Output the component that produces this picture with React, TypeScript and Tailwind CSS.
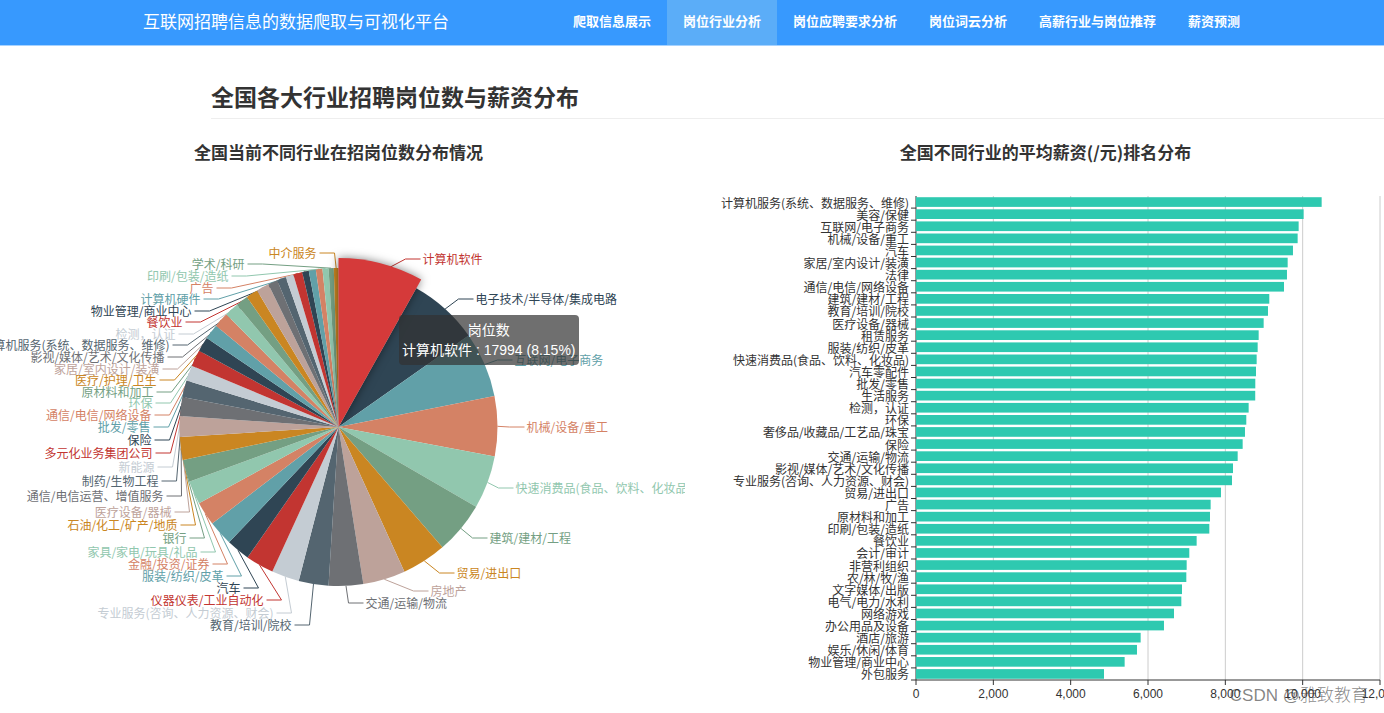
/**
 * Industry analysis page: share of open positions per industry (pie) next to
 * the average salary ranking (horizontal bars).
 */

const NAV_ITEMS = [
  { label: "爬取信息展示", href: "#crawl" },
  { label: "岗位行业分析", href: "#industry", active: true },
  { label: "岗位应聘要求分析", href: "#requirements" },
  { label: "岗位词云分析", href: "#wordcloud" },
  { label: "高薪行业与岗位推荐", href: "#recommend" },
  { label: "薪资预测", href: "#predict" },
];

const PALETTE = [
  "#c23531", "#2f4554", "#61a0a8", "#d48265", "#91c7ae", "#749f83",
  "#ca8622", "#bda29a", "#6e7074", "#546570", "#c4ccd3",
];

// end = closing angle in degrees, clockwise from the top.
// x / y = elbow of the label line, relative to the pie centre.
type Slice = { name: string; end: number; x: number; y: number };

const SLICES: Slice[] = [
  { name: "计算机软件", end: 29.3, x: 67, y: -168 },
  { name: "电子技术/半导体/集成电路", end: 54.9, x: 120, y: -128 },
  { name: "互联网/电子商务", end: 78.8, x: 159, y: -67 },
  { name: "机械/设备/重工", end: 100.7, x: 171, y: 0 },
  { name: "快速消费品(食品、饮料、化妆品)", end: 120.1, x: 160, y: 61 },
  { name: "建筑/建材/工程", end: 139.2, x: 134, y: 111 },
  { name: "贸易/进出口", end: 155.5, x: 101, y: 146 },
  { name: "房地产", end: 171, x: 75, y: 164 },
  { name: "交通/运输/物流", end: 183.6, x: 10, y: 176 },
  { name: "教育/培训/院校", end: 194.5, x: -29, y: 198 },
  { name: "专业服务(咨询、人力资源、财会)", end: 204.6, x: -47, y: 186 },
  { name: "仪器仪表/工业自动化", end: 214.9, x: -57, y: 173 },
  { name: "汽车", end: 223.5, x: -80, y: 161 },
  { name: "服装/纺织/皮革", end: 232.6, x: -97, y: 149 },
  { name: "金融/投资/证券", end: 241.3, x: -111, y: 137 },
  { name: "家具/家电/玩具/礼品", end: 249.9, x: -123, y: 125 },
  { name: "银行", end: 258, x: -134, y: 111 },
  { name: "石油/化工/矿产/地质", end: 266.4, x: -143, y: 98 },
  { name: "医疗设备/器械", end: 274, x: -149, y: 85 },
  { name: "通信/电信运营、增值服务", end: 280.9, x: -157, y: 69 },
  { name: "制药/生物工程", end: 287, x: -162, y: 54 },
  { name: "新能源", end: 292.7, x: -166, y: 40 },
  { name: "多元化业务集团公司", end: 298.7, x: -168, y: 26 },
  { name: "保险", end: 304, x: -169, y: 13 },
  { name: "批发/零售", end: 309.6, x: -170, y: 0 },
  { name: "通信/电信/网络设备", end: 315.1, x: -169, y: -12 },
  { name: "环保", end: 320.3, x: -168, y: -24 },
  { name: "原材料和加工", end: 324.8, x: -167, y: -35 },
  { name: "医疗/护理/卫生", end: 329.2, x: -164, y: -47 },
  { name: "家居/室内设计/装潢", end: 333.8, x: -161, y: -58 },
  { name: "影视/媒体/艺术/文化传播", end: 337.3, x: -156, y: -70 },
  { name: "计算机服务(系统、数据服务、维修)", end: 340.6, x: -151, y: -82 },
  { name: "检测，认证", end: 343.5, x: -145, y: -93 },
  { name: "餐饮业", end: 346.8, x: -138, y: -105 },
  { name: "物业管理/商业中心", end: 349.2, x: -129, y: -116 },
  { name: "计算机硬件", end: 351.8, x: -120, y: -128 },
  { name: "广告", end: 354.2, x: -107, y: -139 },
  { name: "印刷/包装/造纸", end: 356.4, x: -92, y: -151 },
  { name: "学术/科研", end: 358.3, x: -76, y: -163 },
  { name: "中介服务", end: 360, x: -4, y: -174 },
];

const SALARIES: [string, number][] = [
  ["计算机服务(系统、数据服务、维修)", 10491],
  ["美容/保健", 10025],
  ["互联网/电子商务", 9896],
  ["机械/设备/重工", 9870],
  ["汽车", 9749],
  ["家居/室内设计/装潢", 9612],
  ["法律", 9594],
  ["通信/电信/网络设备", 9517],
  ["建筑/建材/工程", 9137],
  ["教育/培训/院校", 9103],
  ["医疗设备/器械", 8991],
  ["租赁服务", 8862],
  ["服装/纺织/皮革", 8836],
  ["快速消费品(食品、饮料、化妆品)", 8810],
  ["汽车零配件", 8793],
  ["批发/零售", 8775],
  ["生活服务", 8773],
  ["检测，认证", 8603],
  ["环保", 8542],
  ["奢侈品/收藏品/工艺品/珠宝", 8508],
  ["保险", 8448],
  ["交通/运输/物流", 8319],
  ["影视/媒体/艺术/文化传播", 8198],
  ["专业服务(咨询、人力资源、财会)", 8172],
  ["贸易/进出口", 7887],
  ["广告", 7620],
  ["原材料和加工", 7603],
  ["印刷/包装/造纸", 7586],
  ["餐饮业", 7258],
  ["会计/审计", 7068],
  ["非营利组织", 7000],
  ["农/林/牧/渔", 6991],
  ["文字媒体/出版", 6879],
  ["电气/电力/水利", 6862],
  ["网络游戏", 6672],
  ["办公用品及设备", 6413],
  ["酒店/旅游", 5810],
  ["娱乐/休闲/体育", 5715],
  ["物业管理/商业中心", 5396],
  ["外包服务", 4862],
];

const RADIUS = 159;
const HOVER_RADIUS = 169;

function polar(deg: number, r: number): [number, number] {
  const a = (deg * Math.PI) / 180;
  return [r * Math.sin(a), -r * Math.cos(a)];
}

function wedge(start: number, end: number, r: number): string {
  const [x1, y1] = polar(start, r);
  const [x2, y2] = polar(end, r);
  return `M0 0 L${x1} ${y1} A${r} ${r} 0 0 1 ${x2} ${y2} Z`;
}

const ARCS = SLICES.map((s, i) => ({
  ...s,
  start: i ? SLICES[i - 1].end : 0,
  color: PALETTE[i % PALETTE.length],
  dir: i < 9 ? 1 : -1,
}));

function PieChart() {
  return (
    <svg
      className="block h-[540px] w-full overflow-visible"
      role="img"
      aria-label="全国当前不同行业在招岗位数分布情况"
    >
      <svg x="50%" y={257} className="overflow-visible">
        {/* label lines run underneath the slices */}
        {ARCS.map((s) => {
          const [px, py] = polar((s.start + s.end) / 2, RADIUS);
          return (
            <polyline
              key={s.name}
              points={`${px},${py} ${s.x},${s.y} ${s.x + s.dir * 15},${s.y}`}
              fill="none"
              stroke={s.color}
            />
          );
        })}
        {ARCS.slice(1).map((s) => (
          <path key={s.name} d={wedge(s.start, s.end, RADIUS)} fill={s.color} />
        ))}
        {ARCS.map((s) => (
          <text
            key={s.name}
            x={s.dir > 0 ? s.x + 17 : s.x - 18}
            y={s.y - 1}
            fill={s.color}
            textAnchor={s.dir > 0 ? "start" : "end"}
            dominantBaseline="central"
            className="text-[12px]"
          >
            {s.name}
          </text>
        ))}
        <path
          d={wedge(0, ARCS[0].end, HOVER_RADIUS)}
          className="fill-[#d53a3a] drop-shadow-[0_0_5px_rgba(0,0,0,0.5)]"
        />
      </svg>
    </svg>
  );
}

const PLOT = { left: 209, top: 26, width: 464, height: 484 };
const MAX = 12000;
const TICKS = [0, 2000, 4000, 6000, 8000, 10000, 12000];

function BarChart() {
  const row = PLOT.height / SALARIES.length;
  const bottom = PLOT.top + PLOT.height;
  const scale = (v: number) => PLOT.left + (v / MAX) * PLOT.width;
  return (
    <svg className="block h-[540px] w-full" role="img" aria-label="全国不同行业的平均薪资排名分布">
      {TICKS.slice(1).map((t) => (
        <line key={t} x1={scale(t)} x2={scale(t)} y1={PLOT.top} y2={bottom} className="stroke-[#cccccc]" />
      ))}
      <path
        d={`M${PLOT.left} ${PLOT.top} V${bottom} H${PLOT.left + PLOT.width}`}
        className="fill-none stroke-[#333333]"
      />
      {SALARIES.map(([name, value], i) => {
        const y = PLOT.top + i * row;
        return (
          <g key={name}>
            <line x1={PLOT.left - 5} x2={PLOT.left} y1={y + row} y2={y + row} className="stroke-[#333333]" />
            <rect
              x={PLOT.left}
              y={y + row * 0.1}
              width={scale(value) - PLOT.left}
              height={row * 0.8}
              className="fill-[#2ec9b0]"
            />
            <text
              x={PLOT.left - 7}
              y={y + row / 2}
              textAnchor="end"
              dominantBaseline="central"
              className="fill-[#333333] text-[12px]"
            >
              {name}
            </text>
          </g>
        );
      })}
      {TICKS.map((t) => (
        <g key={t}>
          <line x1={scale(t)} x2={scale(t)} y1={bottom} y2={bottom + 5} className="stroke-[#333333]" />
          <text
            x={scale(t)}
            y={bottom + 14}
            textAnchor="middle"
            dominantBaseline="central"
            className="fill-[#333333] font-['Liberation_Sans',sans-serif] text-[12px]"
          >
            {t.toLocaleString("en-US")}
          </text>
        </g>
      ))}
    </svg>
  );
}

function Navbar() {
  return (
    <header className="border-b border-[#a6d2ff] bg-[#3799fe] text-white">
      <div className="mx-auto flex max-w-[1128px] items-stretch justify-between pl-[15px]">
        <a href="#home" className="shrink-0 text-[17px] leading-[41px]">
          互联网招聘信息的数据爬取与可视化平台
        </a>
        <nav className="flex text-[13px] leading-[41px] font-bold">
          {NAV_ITEMS.map((item) => (
            <a
              key={item.href}
              href={item.href}
              className={item.active ? "h-[45px] bg-[#5badf8] px-4 whitespace-nowrap" : "h-[45px] px-4 whitespace-nowrap"}
            >
              {item.label}
            </a>
          ))}
        </nav>
      </div>
    </header>
  );
}

export default function App() {
  return (
    <div className="relative min-h-screen overflow-hidden bg-white font-['Noto_Sans_CJK_SC',sans-serif] text-[#333333]">
      <Navbar />
      <main>
        <h1 className="mt-[35px] ml-[211px] border-b border-[#eeeeee] pb-[7px] text-[23px] leading-[30px] font-bold">
          全国各大行业招聘岗位数与薪资分布
        </h1>
        <div className="mt-5 grid grid-cols-2 gap-[30px]">
          <section>
            <h2 className="mb-[5px] text-center text-[17px] leading-[26px] font-bold">
              全国当前不同行业在招岗位数分布情况
            </h2>
            <div className="relative -mr-2 overflow-hidden pr-2">
              <PieChart />
              <div className="absolute top-[145px] left-[399px] rounded-[4px] bg-[#323232b3] px-[3px] py-[5px] text-center font-['Liberation_Sans','Noto_Sans_CJK_SC',sans-serif] text-[14px] leading-[20px] whitespace-nowrap text-white">
                <p>岗位数</p>
                <p>计算机软件 : 17994 (8.15%)</p>
              </div>
            </div>
          </section>
          <section>
            <h2 className="mb-[5px] text-center text-[17px] leading-[26px] font-bold">
              全国不同行业的平均薪资(/元)排名分布
            </h2>
            <BarChart />
          </section>
        </div>
      </main>
      <p className="absolute right-4 bottom-[5px] font-['Liberation_Sans','Noto_Sans_CJK_SC',sans-serif] text-[17px] leading-[24px] font-light text-[#33333399]">
        CSDN @雅致教育
      </p>
    </div>
  );
}
